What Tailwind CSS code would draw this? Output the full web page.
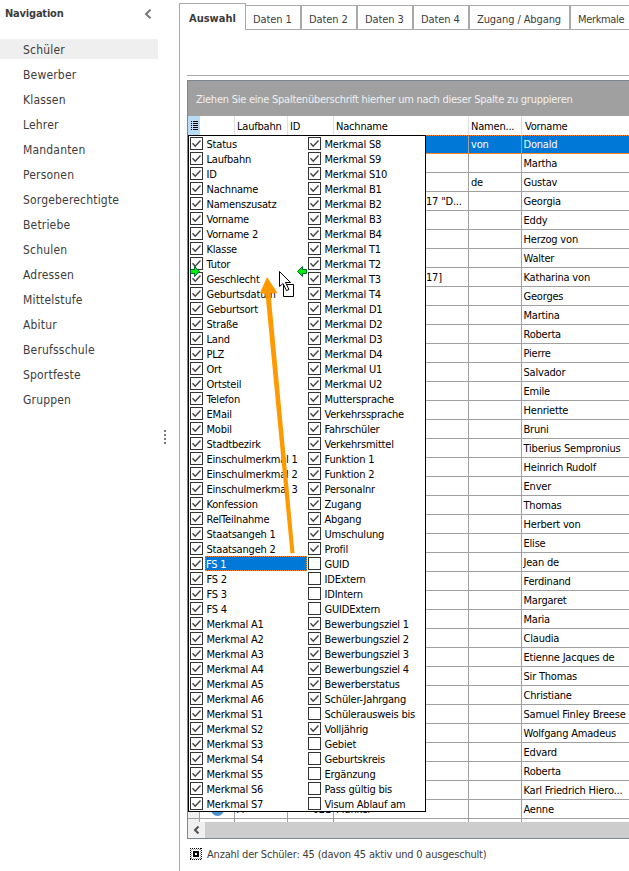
<!DOCTYPE html>
<html lang="de"><head><meta charset="utf-8"><title>Schüler</title>
<script src="https://cdn.jsdelivr.net/npm/@tailwindcss/browser@4"></script></head>
<body class="bg-white">
<div class="relative flex w-[629px] h-[871px] overflow-hidden font-['DejaVu_Sans_Condensed','DejaVu_Sans',sans-serif] text-[11px] leading-[15px] text-black whitespace-nowrap tracking-[-0.2px]">
  <aside class="relative w-[179px] shrink-0 text-[#3c3c3c]">
    <div class="flex h-[39px] items-start justify-between pl-[5px] pr-[27px] pt-[6px]">
      <b class="text-[11px] tracking-[-0.2px]">Navigation</b>
      <svg class="mt-[3px]" width="8" height="10" viewBox="0 0 8 10" fill="none" stroke="#777" stroke-width="2"><path d="M6.5 .8 2 5l4.5 4.2"/></svg>
    </div>
    <nav id="nav" class="flex flex-col gap-[5px] text-[12px] leading-[22px] tracking-[0.18px]"></nav>
    <div class="absolute left-[164px] top-[430px] flex flex-col gap-[2px]"><i class="size-[2px] bg-[#777]"></i><i class="size-[2px] bg-[#777]"></i><i class="size-[2px] bg-[#777]"></i><i class="size-[2px] bg-[#777]"></i></div>
  </aside>
  <main class="flex flex-col w-[450px] shrink-0 pt-[3px]">
    <div class="flex items-end h-[27px] text-[#3c3c3c]">
      <div class="w-[67px] h-[27px] border-t border-x border-[#a9a9a9] pl-[9px] pt-[7px] font-bold tracking-normal">Auswahl</div>
      <div class="flex h-[25px] border-t border-b border-[#a9a9a9] grow leading-[27px] tracking-[-0.1px]">
        <div class="w-[56px] pl-[7px] border-r-2 border-[#a9a9a9]">Daten 1</div>
        <div class="w-[56px] pl-[7px] border-r-2 border-[#a9a9a9]">Daten 2</div>
        <div class="w-[56px] pl-[7px] border-r-2 border-[#a9a9a9]">Daten 3</div>
        <div class="w-[56px] pl-[7px] border-r-2 border-[#a9a9a9]">Daten 4</div>
        <div class="w-[101px] pl-[7px] border-r-2 border-[#a9a9a9]">Zugang / Abgang</div>
        <div class="pl-[7px] tracking-[-0.35px]">Merkmale</div>
      </div>
    </div>
    <div class="flex flex-col grow border-l border-[#a9a9a9] pl-[7px]">
      <div class="h-[46px] border-b border-[#a9a9a9]"></div>
      <section class="mt-[4px] h-[759px] border-l border-y border-[#7f858c]">
        <div class="h-[35px] bg-[#a0a0a0] pl-[8px] pt-[11px] text-[#f0f0f0] tracking-[-0.25px]"><span>Ziehen Sie eine Spaltenüberschrift hierher um nach dieser Spalte zu gruppieren</span></div>
        <div class="grid grid-cols-[12px_35px_53px_46px_135px_53px_108px] grid-rows-[19px] h-[19px] leading-[22px]">
          <div class="bg-[#b9dcf5] pl-[3px] pt-[5px]"><svg width="7" height="9" viewBox="0 0 7 9" shape-rendering="crispEdges"><path d="M0 0h1v1H0zM2 0h5v1H2zM0 2h1v1H0zM2 2h5v1H2zM0 4h1v1H0zM2 4h5v1H2zM0 6h1v1H0zM2 6h5v1H2zM0 8h1v1H0zM2 8h5v1H2z"/></svg></div>
          <div class="border-r border-[#e0e0e0]"></div><div class="border-r border-[#e0e0e0] pl-[2px]">Laufbahn</div><div class="pl-[2px] border-r border-[#e0e0e0]">ID</div><div class="border-r border-[#e0e0e0] pl-[2px]">Nachname</div><div class="border-r border-[#e0e0e0] pl-[2px]">Namen...</div><div class="pl-[3px]">Vorname</div>
        </div>
        <div id="rows" class="h-[687px] overflow-hidden"></div>
        <div class="flex h-[16px] bg-[#cdcdcd]"><div class="w-[17px] bg-[#f0f0f0] pl-[5px] pt-[4px]"><svg width="7" height="8" viewBox="0 0 7 8" fill="none" stroke="#505050" stroke-width="2"><path d="M5.5.5 2 4l3.500 3.500"/></svg></div></div>
      </section>
      <footer class="flex items-center gap-[5px] pl-[3px] h-[30px] text-[#3c3c3c]">
        <svg width="12" height="12" viewBox="0 0 12 12" fill="none" stroke="#000" shape-rendering="crispEdges"><path d="M0 .5h12M0 11.500h12M.5 0v12M11.500 0v12" stroke-dasharray="1 1"/><path d="M1 1.500h10M1 10.500h10M1.500 1v10M10.500 1v10" stroke="#999" stroke-dasharray="1 1"/><rect x="4" y="4" width="4" height="4" fill="#fff" stroke-width="2"/></svg>
        <span id="status">Anzahl der Schüler: 45 (davon 45 aktiv und 0 ausgeschult)</span>
      </footer>
    </div>
  </main>
  <div id="popup" class="absolute left-[188px] top-[135px] flex w-[238px] h-[677px] border border-black bg-white pl-px">
    <div id="c1" class="w-[118px]"></div><div id="c2" class="w-[116px]"></div>
  </div>
  <svg class="absolute left-0 top-0" width="629" height="871">
    <path d="M267 277 L277.500 293 L270.500 293.500 L294.500 553 L290.500 553.500 L265.500 294 L260 293z" fill="#ff9900"/>
    <path d="M190.500 269.500h4v-3l5 5-5 5v-3h-4z M306.500 269.500h-4v-3l-5 5 5 5v-3h4z" fill="#0e0" stroke="#063"/>
    <path d="M283.500 284.500h10v12h-10z" fill="#fff" stroke="#000"/>
    <path d="M279.500 271.500v15l3.500-3 3.500 7 2.500-1-3.500-7h5z" fill="#fff" stroke="#000"/>
  </svg>
</div>
<script>
const $=id=>document.getElementById(id);
$('nav').innerHTML='Schüler,Bewerber,Klassen,Lehrer,Mandanten,Personen,Sorgeberechtigte,Betriebe,Schulen,Adressen,Mittelstufe,Abitur,Berufsschule,Sportfeste,Gruppen'.split(',').map((t,i)=>`<div class="w-[158px] h-[20px] pl-[23px] ${i?'':'bg-[#efefef]'}">${t}</div>`).join('');
const names='Donald,Martha,Gustav,Georgia,Eddy,Herzog von,Walter,Katharina von,Georges,Martina,Roberta,Pierre,Salvador,Emile,Henriette,Bruni,Tiberius Sempronius,Heinrich Rudolf,Enver,Thomas,Herbert von,Elise,Jean de,Ferdinand,Margaret,Maria,Claudia,Etienne Jacques de,Sir Thomas,Christiane,Samuel Finley Breese,Wolfgang Amadeus,Edvard,Roberta,Karl Friedrich Hiero...,Aenne,'.split(',');
const mid={0:'von',2:'de'},last={3:'17 "D...',7:'17]'};
$('rows').innerHTML=names.map((n,i)=>{
  const c='border-r border-b border-[#a0a0a0]';
  return `<div class="relative grid grid-cols-[12px_35px_53px_46px_135px_53px_108px] grid-rows-[19px] h-[19px] leading-[20px] ${i?'':'bg-[#0078d7] text-white'}"><div class="${c} bg-[#f0f0f0]"></div><div class="${c} pl-[11px] pt-[3px]">${i==35?'<div class="size-[13px] rounded-full bg-[#4a90d0]"></div>':''}</div><div class="${c} pl-[2px]">${i==35?'A':''}</div><div class="${c} text-right pr-[2px]">${i==35?'021':''}</div><div class="${c} ${i==35?'pl-[2px]':'pl-[92px]'}">${i==35?'Münker':last[i]||''}</div><div class="${c} pl-[2px]">${mid[i]||''}</div><div class="border-b border-[#a0a0a0] pl-[1.5px]">${n}</div>${i?'':'<div class="absolute inset-0 border-y border-dotted border-[#ff8728]"></div>'}</div>`}).join('');
const a='Status,Laufbahn,ID,Nachname,Namenszusatz,Vorname,Vorname 2,Klasse,Tutor,Geschlecht,Geburtsdatum,Geburtsort,Straße,Land,PLZ,Ort,Ortsteil,Telefon,EMail,Mobil,Stadtbezirk,Einschulmerkmal 1,Einschulmerkmal 2,Einschulmerkmal 3,Konfession,RelTeilnahme,Staatsangeh 1,Staatsangeh 2,FS 1,FS 2,FS 3,FS 4,Merkmal A1,Merkmal A2,Merkmal A3,Merkmal A4,Merkmal A5,Merkmal A6,Merkmal S1,Merkmal S2,Merkmal S3,Merkmal S4,Merkmal S5,Merkmal S6,Merkmal S7'.split(',');
const b='Merkmal S8,Merkmal S9,Merkmal S10,Merkmal B1,Merkmal B2,Merkmal B3,Merkmal B4,Merkmal T1,Merkmal T2,Merkmal T3,Merkmal T4,Merkmal D1,Merkmal D2,Merkmal D3,Merkmal D4,Merkmal U1,Merkmal U2,Muttersprache,Verkehrssprache,Fahrschüler,Verkehrsmittel,Funktion 1,Funktion 2,Personalnr,Zugang,Abgang,Umschulung,Profil,GUID,IDExtern,IDIntern,GUIDExtern,Bewerbungsziel 1,Bewerbungsziel 2,Bewerbungsziel 3,Bewerbungsziel 4,Bewerberstatus,Schüler-Jahrgang,Schülerausweis bis,Volljährig,Gebiet,Geburtskreis,Ergänzung,Pass gültig bis,Visum Ablauf am'.split(',');
const off=[28,29,30,31,38,40,41,42,43,44];
const item=(t,on,sel)=>`<div class="flex h-[15px] items-center"><svg class="shrink-0" width="13" height="13" viewBox="0 0 13 13" fill="none" stroke="#333"><rect x=".5" y=".5" width="12" height="12" fill="#fff"/>${on?'<path d="M2.500 6.300 5.200 9.200 10.500 3.500" stroke="#444" stroke-width="1.400"/>':''}</svg><span class="ml-[2px] h-[15px] ${sel?'w-[102px] bg-[#0078d7] text-white border border-dotted border-[#ff8728] leading-[15px]':'pl-[1.5px] leading-[17px]'}">${t}</span></div>`;
$('c1').innerHTML=a.map((t,i)=>item(t,1,i==28)).join('');
$('c2').innerHTML=b.map((t,i)=>item(t,!off.includes(i),0)).join('');
</script>
</body></html>
